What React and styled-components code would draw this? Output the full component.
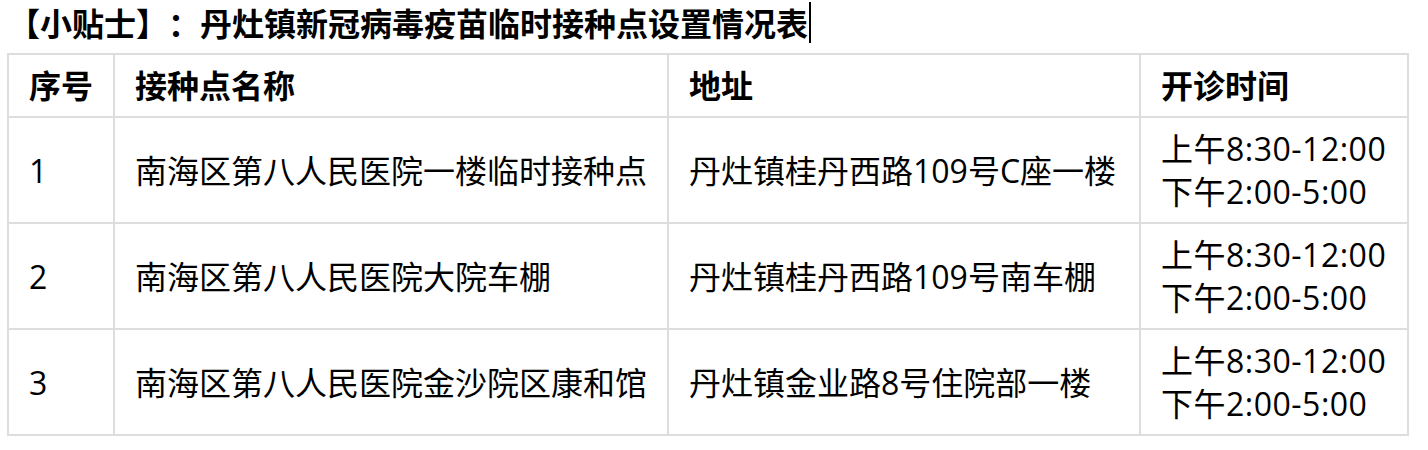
import styled, { createGlobalStyle } from "styled-components";

const GlobalStyle = createGlobalStyle`
  html, body {
    margin: 0;
    padding: 0;
    background: #fff;
  }
  body {
    font-family: "Open Sans", "Noto Sans CJK SC", sans-serif;
    color: #000;
    text-spacing-trim: space-all;
  }
`;

const Page = styled.div`
  padding: 2px 0 0 7px;
`;

const Title = styled.div`
  font-size: 32px;
  line-height: 43px;
  font-weight: 700;
  margin: 0 0 8px 1px;
  white-space: nowrap;
  text-spacing-trim: space-all;
`;

const Caret = styled.span`
  display: inline-block;
  width: 2px;
  height: 41px;
  background: #000;
  vertical-align: top;
  margin-left: 1px;
`;

const Table = styled.table`
  width: 1400px;
  table-layout: fixed;
  border-collapse: collapse;
  font-size: 32px;
  line-height: 43px;
`;

const Cell = styled.td`
  border: 2px solid #dddddd;
  padding: 9px 20px;
  vertical-align: middle;
  text-align: left;
  font-weight: ${(p) => (p.$head ? 700 : 400)};
  white-space: nowrap;
`;

const Lines = styled.div`
  display: flex;
  flex-direction: column;
  letter-spacing: 0.5px;
`;

const columns = [106, 554, 472, 268];
const headers = ["序号", "接种点名称", "地址", "开诊时间"];

const rows = [
  ["1", "南海区第八人民医院一楼临时接种点", "丹灶镇桂丹西路109号C座一楼"],
  ["2", "南海区第八人民医院大院车棚", "丹灶镇桂丹西路109号南车棚"],
  ["3", "南海区第八人民医院金沙院区康和馆", "丹灶镇金业路8号住院部一楼"],
];

const hours = ["上午8:30-12:00", "下午2:00-5:00"];

export default function App() {
  return (
    <>
      <GlobalStyle />
      <Page>
        <Title>
          【小贴士】：丹灶镇新冠病毒疫苗临时接种点设置情况表
          <Caret />
        </Title>
        <Table>
          <colgroup>
            {columns.map((w, i) => (
              <col key={i} style={{ width: w }} />
            ))}
          </colgroup>
          <tbody>
            <tr>
              {headers.map((h) => (
                <Cell as="th" key={h} $head>
                  {h}
                </Cell>
              ))}
            </tr>
            {rows.map((r) => (
              <tr key={r[0]}>
                <Cell>{r[0]}</Cell>
                <Cell>{r[1]}</Cell>
                <Cell>{r[2]}</Cell>
                <Cell>
                  <Lines>
                    {hours.map((t) => (
                      <span key={t}>{t}</span>
                    ))}
                  </Lines>
                </Cell>
              </tr>
            ))}
          </tbody>
        </Table>
      </Page>
    </>
  );
}
